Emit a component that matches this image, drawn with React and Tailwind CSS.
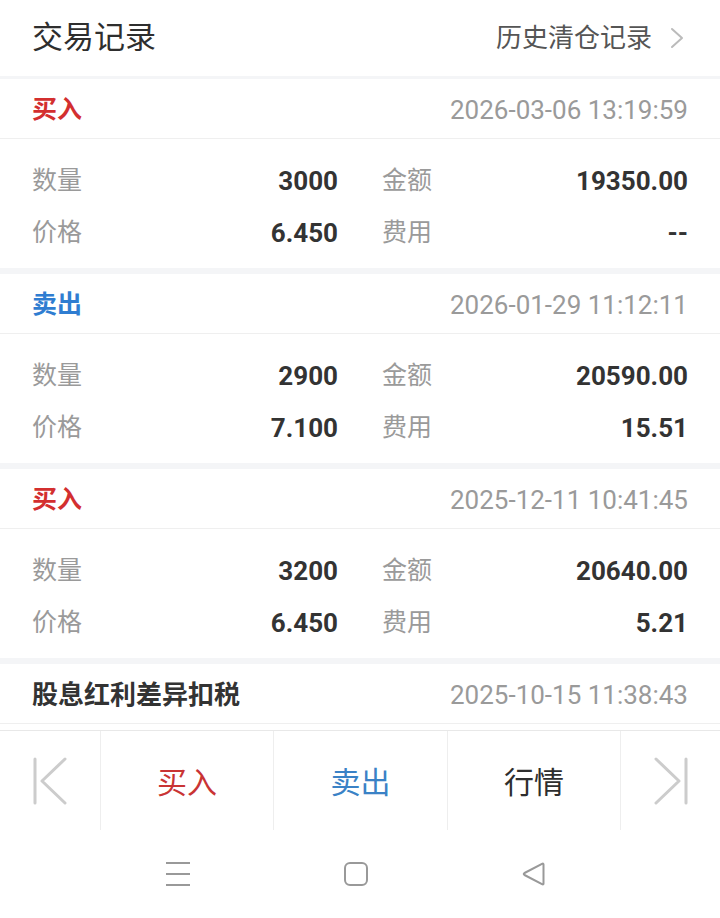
import React from 'react';

const records = [
  {
    type: '买入',
    color: 'text-[#d32f2f]',
    time: '2026-03-06 13:19:59',
    qty: '3000',
    amount: '19350.00',
    price: '6.450',
    fee: '--',
  },
  {
    type: '卖出',
    color: 'text-[#2f7dd1]',
    time: '2026-01-29 11:12:11',
    qty: '2900',
    amount: '20590.00',
    price: '7.100',
    fee: '15.51',
  },
  {
    type: '买入',
    color: 'text-[#d32f2f]',
    time: '2025-12-11 10:41:45',
    qty: '3200',
    amount: '20640.00',
    price: '6.450',
    fee: '5.21',
  },
];

function Cell({ label, value }) {
  return (
    <div className="flex items-center justify-between">
      <span className="text-[25px] text-[#9a9a9a]">{label}</span>
      <span className="text-[26px] font-bold text-[#333]">{value}</span>
    </div>
  );
}

function RecordCard({ rec }) {
  return (
    <div className="bg-white">
      <div className="h-[60px] pt-[3px] px-[32px] flex items-center justify-between border-b border-[#efefef]">
        <span className={`text-[25px] font-bold ${rec.color}`}>{rec.type}</span>
        <span className="text-[26px] text-[#9a9a9a]">{rec.time}</span>
      </div>
      <div className="pt-[16px] pb-[9px] px-[32px]">
        <div className="grid grid-cols-2 gap-x-[44px] h-[52px] items-center">
          <Cell label="数量" value={rec.qty} />
          <Cell label="金额" value={rec.amount} />
        </div>
        <div className="grid grid-cols-2 gap-x-[44px] h-[52px] items-center">
          <Cell label="价格" value={rec.price} />
          <Cell label="费用" value={rec.fee} />
        </div>
      </div>
    </div>
  );
}

export default function App() {
  return (
    <div
      className="w-[720px] h-[918px] flex flex-col overflow-hidden bg-white"
      style={{ fontFamily: 'Roboto, "Noto Sans CJK SC", sans-serif' }}
    >
      {/* title bar */}
      <div className="h-[76px] shrink-0 px-[32px] flex items-center justify-between">
        <span className="text-[31px] text-[#2e2e2e]">交易记录</span>
        <div className="flex items-center gap-[18px] pr-[4px]">
          <span className="text-[26px] text-[#555]">历史清仓记录</span>
          <svg width="14" height="22" viewBox="0 0 14 22">
            <polyline points="2,2 12,11 2,20" fill="none" stroke="#bbb" strokeWidth="2" strokeLinecap="round" strokeLinejoin="round" />
          </svg>
        </div>
      </div>

      {/* list */}
      <div className="flex-1 overflow-hidden bg-[#f4f5f7] pt-[3px] flex flex-col gap-[6px]">
        {records.map((r, i) => (
          <RecordCard key={i} rec={r} />
        ))}
        <div className="bg-white">
          <div className="h-[60px] pt-[3px] px-[32px] flex items-center justify-between border-b border-[#efefef]">
            <span className="text-[26px] font-bold text-[#333]">股息红利差异扣税</span>
            <span className="text-[26px] text-[#9a9a9a]">2025-10-15 11:38:43</span>
          </div>
          <div className="h-[60px]" />
        </div>
      </div>

      {/* action bar */}
      <div className="h-[100px] shrink-0 border-t border-[#e8e8e8] grid grid-cols-[100px_173px_174px_173px_100px] bg-white">
        <div className="flex items-center justify-center">
          <svg width="36" height="48" viewBox="0 0 36 48">
            <line x1="3" y1="2" x2="3" y2="46" stroke="#ccc" strokeWidth="3" strokeLinecap="round" />
            <polyline points="33,2 10,24 33,46" fill="none" stroke="#ccc" strokeWidth="3" strokeLinecap="round" strokeLinejoin="round" />
          </svg>
        </div>
        <div className="border-l border-[#eee] flex items-center justify-center pt-[3px]">
          <span className="text-[30px] text-[#c93434]">买入</span>
        </div>
        <div className="border-l border-[#eee] flex items-center justify-center pt-[3px]">
          <span className="text-[30px] text-[#3a82c6]">卖出</span>
        </div>
        <div className="border-l border-[#eee] flex items-center justify-center pt-[3px]">
          <span className="text-[30px] text-[#2e2e2e]">行情</span>
        </div>
        <div className="border-l border-[#eee] flex items-center justify-center">
          <svg width="36" height="48" viewBox="0 0 36 48">
            <polyline points="3,2 26,24 3,46" fill="none" stroke="#ccc" strokeWidth="3" strokeLinecap="round" strokeLinejoin="round" />
            <line x1="33" y1="2" x2="33" y2="46" stroke="#ccc" strokeWidth="3" strokeLinecap="round" />
          </svg>
        </div>
      </div>

      {/* system nav */}
      <div className="h-[88px] shrink-0 bg-white flex items-center pl-[166px] gap-[154px]">
        <svg width="24" height="24" viewBox="0 0 24 24">
          <line x1="0" y1="1" x2="24" y2="1" stroke="#999" strokeWidth="2" />
          <line x1="0" y1="12" x2="24" y2="12" stroke="#999" strokeWidth="2" />
          <line x1="0" y1="23" x2="24" y2="23" stroke="#999" strokeWidth="2" />
        </svg>
        <svg width="24" height="24" viewBox="0 0 24 24">
          <rect x="1" y="1" width="22" height="22" rx="5" fill="none" stroke="#999" strokeWidth="2" />
        </svg>
        <svg width="24" height="24" viewBox="0 0 24 24">
          <path d="M21.5 2.5 L21.5 21.5 Q21.5 23 20 22.2 L2.5 13 Q1 12 2.5 11 L20 1.8 Q21.5 1 21.5 2.5 Z" fill="none" stroke="#999" strokeWidth="2" strokeLinejoin="round" />
        </svg>
      </div>
    </div>
  );
}
